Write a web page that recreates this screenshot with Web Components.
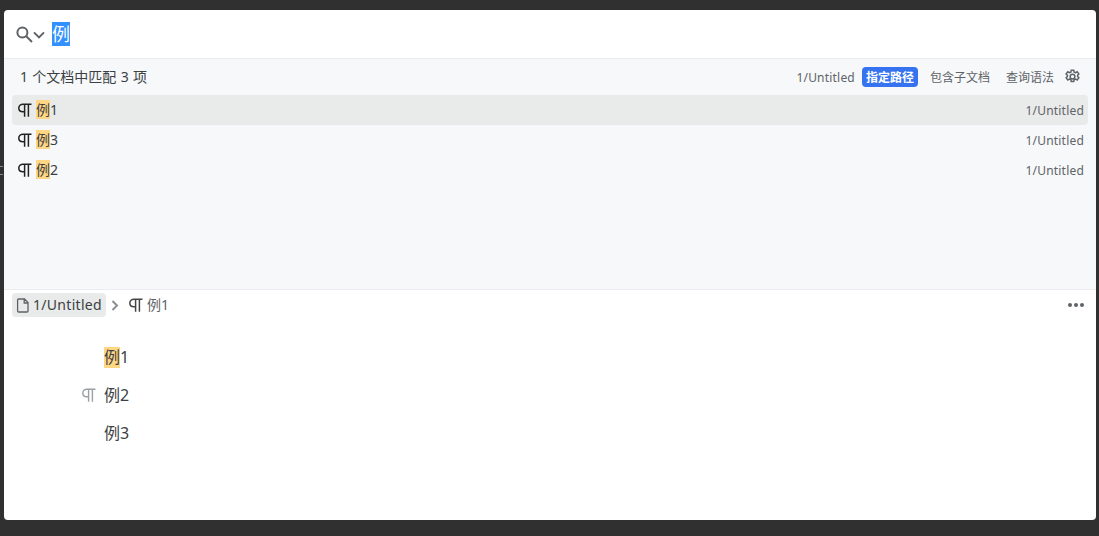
<!DOCTYPE html>
<html>
<head>
<meta charset="utf-8">
<style>
html, body { margin: 0; height: 100%; }
body {
  background: #303030;
  font-family: "Noto Sans", "Noto Sans CJK SC", sans-serif;
  color: #222;
  overflow: hidden;
}
</style>
</head>
<body>
<search-dialog>
  <search-bar slot="bar" value="例"></search-bar>
  <search-head slot="head"></search-head>
  <search-row slot="rows" active mark="例" rest="1"></search-row>
  <search-row slot="rows" mark="例" rest="3"></search-row>
  <search-row slot="rows" mark="例" rest="2"></search-row>
  <doc-preview slot="preview"></doc-preview>
</search-dialog>

<script>
const paragraphIcon = (size, color, sw) => `
  <svg width="${size}" height="${size}" viewBox="0 0 14 14" fill="none" stroke="${color}" stroke-width="${sw}" style="display:block">
    <path d="M13.500 1.200H5C2.600 1.200.8 2.800.8 5S2.600 8.800 5 8.800H6"/>
    <path d="M6.600 1.200V13.800M10.400 1.200V13.800"/>
  </svg>`;

class SearchDialog extends HTMLElement {
  constructor() {
    super();
    this.attachShadow({mode: "open"});
    this.shadowRoot.innerHTML = `
      <style>
        :host { display: block; position: relative; box-sizing: border-box; height: 536px; padding: 10px 3px 16px 4px; }
        /* bit of the page behind the dialog, sticking out on the left */
        .behind { position: absolute; left: 0; top: 166px; width: 3px; height: 9px; border-top: 1px solid #8a8a8a; border-bottom: 1px solid #8a8a8a; box-sizing: border-box; }
        .box { display: flex; flex-direction: column; height: 100%; background: #fff; border-radius: 4px; overflow: hidden; }
        .list { height: 230px; flex: none; background: #f6f8fa; border-top: 1px solid #eaecef; border-bottom: 1px solid #eaecef; box-sizing: content-box; }
        .rows { display: flex; flex-direction: column; padding: 0 8px; }
      </style>
      <div class="behind"></div>
      <div class="box">
        <slot name="bar"></slot>
        <div class="list">
          <slot name="head"></slot>
          <div class="rows"><slot name="rows"></slot></div>
        </div>
        <slot name="preview"></slot>
      </div>`;
  }
}
customElements.define("search-dialog", SearchDialog);

class SearchBar extends HTMLElement {
  constructor() {
    super();
    this.attachShadow({mode: "open"});
    this.shadowRoot.innerHTML = `
      <style>
        :host { display: flex; align-items: center; height: 48px; flex: none; padding-left: 12px; }
        svg { display: block; }
        .arrow { margin: 2px 0 0 0; }
        .val { margin-left: 7px; height: 24px; line-height: 24px; font-size: 18px; background: #3390ff; color: #fff; }
      </style>
      <svg width="17" height="17" viewBox="0 0 17 17" fill="none" stroke="#5f6368" stroke-width="2">
        <circle cx="6.400" cy="6.400" r="5"/><path d="M10 10l6 6"/>
      </svg>
      <svg class="arrow" width="12" height="12" viewBox="0 0 12 12" fill="none" stroke="#5f6368" stroke-width="2"><path d="M1 3.400L6 8.400l5-5"/></svg>
      <span class="val">${this.getAttribute("value")}</span>`;
  }
}
customElements.define("search-bar", SearchBar);

class SearchHead extends HTMLElement {
  constructor() {
    super();
    this.attachShadow({mode: "open"});
    this.shadowRoot.innerHTML = `
      <style>
        :host { display: flex; align-items: center; height: 36px; padding: 0 16px 0 16px; font-size: 14px; color: #3c4043; }
        .count { flex: 1; margin-top: -2px; word-spacing: .7px; }
        .act { font-size: 12px; color: #5f6368; margin-left: 8px; padding: 2px 4px 0; line-height: 18px; border-radius: 4px; }
        .on { background: #3573f0; color: #fff; font-weight: 700; margin-left: 3px; margin-right: 0; }
        .path { font-size: 12px; letter-spacing: .2px; color: #5f6368; margin-right: 4px; }
        svg { display: block; margin-left: 7px; margin-top: -1px; }
      </style>
      <span class="count">1 个文档中匹配 3 项</span>
      <span class="path">1/Untitled</span>
      <span class="act on">指定路径</span>
      <span class="act">包含子文档</span>
      <span class="act">查询语法</span>
      <svg width="15" height="15" viewBox="0 0 24 24" fill="none" stroke="#5f6368" stroke-width="2.400">
        <circle cx="12" cy="12" r="3.800"/>
        <path d="M10 2h4l.6 3 2.300 1 2.600-1.600 2.700 3.400-2 2.100v2.200l2 2.100-2.700 3.400-2.600-1.600-2.300 1-.6 3h-4l-.6-3-2.300-1-2.600 1.600-2.700-3.400 2-2.100v-2.200l-2-2.100 2.700-3.400 2.600 1.600 2.300-1z"/>
      </svg>`;
  }
}
customElements.define("search-head", SearchHead);

class SearchRow extends HTMLElement {
  constructor() {
    super();
    this.attachShadow({mode: "open"});
    this.shadowRoot.innerHTML = `
      <style>
        :host { display: flex; align-items: center; height: 30px; padding: 0 4px 0 6px; border-radius: 4px; font-size: 14px; color: #3c4043; }
        :host([active]) { background: #e9eaea; }
        mark { background: #ffd683; color: inherit; line-height: 19px; display: inline-block; }
        .text { flex: 1; margin-left: 4px; margin-top: -2px; }
        .path { font-size: 12px; letter-spacing: .2px; color: #5f6368; }
      </style>
      ${paragraphIcon(14, "#222", 1.5)}
      <span class="text"><mark>${this.getAttribute("mark")}</mark>${this.getAttribute("rest")}</span>
      <span class="path">1/Untitled</span>`;
  }
}
customElements.define("search-row", SearchRow);

class DocPreview extends HTMLElement {
  constructor() {
    super();
    this.attachShadow({mode: "open"});
    this.shadowRoot.innerHTML = `
      <style>
        :host { display: block; flex: 1; color: #3c4043; }
        .crumb { display: flex; align-items: center; height: 30px; padding: 0 12px 0 8px; }
        .doc { display: flex; align-items: center; gap: 3px; height: 24px; padding: 0 4px; background: #e9eaea; border-radius: 4px; font-size: 14px; letter-spacing: .3px; line-height: 22px; }
        .chev { margin: 0 10px 0 5px; }
        .sub { margin: -2px 0 0 4px; font-size: 14px; color: #5f6368; }
        .dots { margin-left: auto; }
        .body { padding: 18px 0 0 100px; font-size: 16px; }
        .p { position: relative; height: 38px; line-height: 38px; }
        .p mark { background: #ffd683; color: inherit; display: inline-block; line-height: 21px; }
        .gutter { position: absolute; left: -22px; top: 12px; }
        svg { display: block; flex: none; }
      </style>
      <div class="crumb">
        <span class="doc">
          <svg width="14" height="15" viewBox="0 0 14 15" fill="none" stroke="#5f6368" stroke-width="1.300"><path d="M2.600 1H8.500L12 4.500V13a1 1 0 0 1-1 1H2.600a1 1 0 0 1-1-1V2a1 1 0 0 1 1-1zM8.200 1v4H12"/></svg>
          <span>1/Untitled</span>
        </span>
        <svg class="chev" width="8" height="11" viewBox="0 0 8 11" fill="none" stroke="#8a8d91" stroke-width="2"><path d="M1.500 1l4.500 4.500L1.500 10"/></svg>
        ${paragraphIcon(14, "#444", 1.5)}
        <span class="sub">例1</span>
        <svg class="dots" width="16" height="4" viewBox="0 0 16 4" fill="#5f6368"><circle cx="2" cy="2" r="2"/><circle cx="8" cy="2" r="2"/><circle cx="14" cy="2" r="2"/></svg>
      </div>
      <div class="body">
        <div class="p"><mark>例</mark>1</div>
        <div class="p"><span class="gutter">${paragraphIcon(14, "#9aa0a6", 1.4)}</span>例2</div>
        <div class="p">例3</div>
      </div>`;
  }
}
customElements.define("doc-preview", DocPreview);
</script>
</body>
</html>
